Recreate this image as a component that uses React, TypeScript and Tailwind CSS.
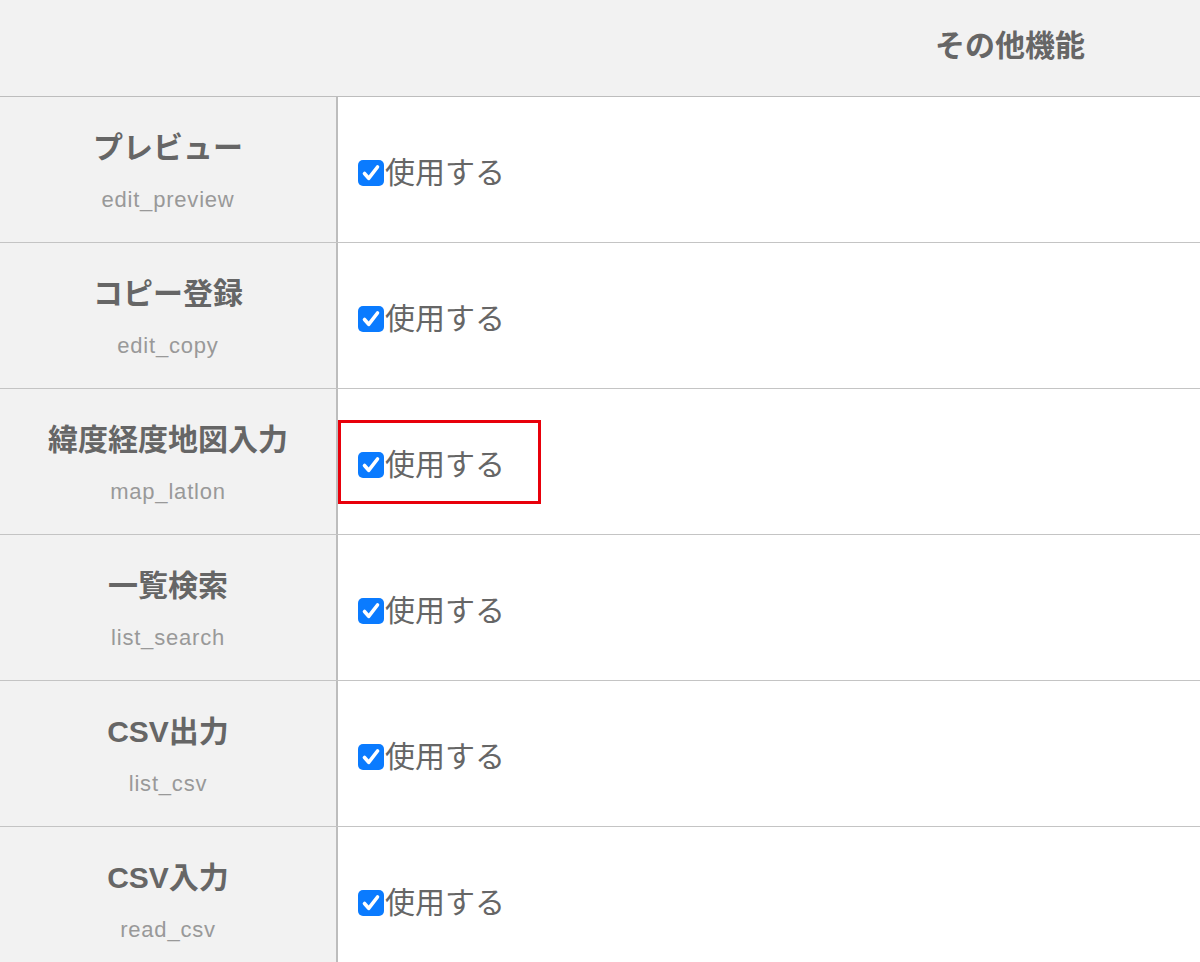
const rows = [
  { title: "プレビュー", key: "edit_preview" },
  { title: "コピー登録", key: "edit_copy" },
  { title: "緯度経度地図入力", key: "map_latlon", marked: true },
  { title: "一覧検索", key: "list_search" },
  { title: "CSV出力", key: "list_csv" },
  { title: "CSV入力", key: "read_csv" },
];

function CheckBox() {
  return (
    <span className="inline-flex h-[26px] w-[26px] shrink-0 items-center justify-center rounded-[5px] bg-[#0a7bff]">
      <svg width="22" height="22" viewBox="0 0 22 22" fill="none">
        <path d="M4.5 11.5l4.2 4.8L17.5 5" stroke="#fff" strokeWidth="3.6" strokeLinecap="round" strokeLinejoin="round" />
      </svg>
    </span>
  );
}

export default function App() {
  return (
    <div
      className="min-h-[962px] w-[1200px] overflow-hidden bg-white text-[#666]"
      style={{ fontFamily: '"Liberation Sans", "Noto Sans CJK JP", sans-serif' }}
    >
      <div className="flex h-[97px] items-center justify-end border-b border-[#bdbdbd] bg-[#f2f2f2] pr-[115px] pb-[4px]">
        <h2 className="text-[30px] font-bold leading-none text-[#666]">その他機能</h2>
      </div>

      {rows.map((r) => (
        <div key={r.key} className="grid h-[146px] grid-cols-[338px_1fr] border-b border-[#c4c4c4]">
          <div className="flex flex-col items-center justify-center border-r-2 border-[#bdbdbd] bg-[#f2f2f2] pt-[5px]">
            <div className="text-[30px] font-bold leading-[36px] text-[#666]">{r.title}</div>
            <div className="mt-[20px] text-[22px] leading-[28px] tracking-[0.8px] text-[#999]">{r.key}</div>
          </div>
          <div className="relative flex items-center pl-[20px] pt-[6px]">
            <label className="flex items-center gap-[1px]">
              <CheckBox />
              <span className="text-[30px] leading-none text-[#666]">使用する</span>
            </label>
            {r.marked && (
              <div className="pointer-events-none absolute left-0 top-[31px] h-[84px] w-[203px] border-[3px] border-[#e8000b]" />
            )}
          </div>
        </div>
      ))}
    </div>
  );
}
